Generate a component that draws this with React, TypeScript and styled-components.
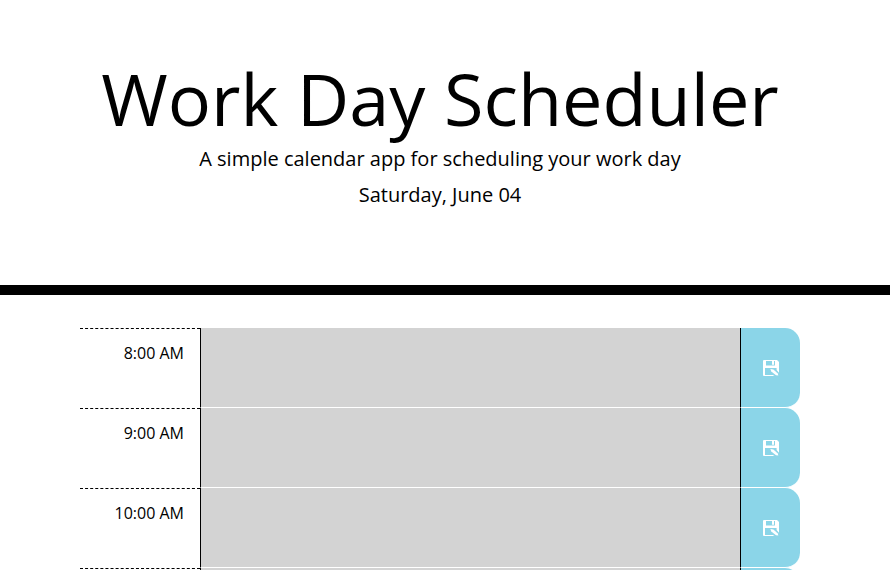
import React from "react";
import styled, { createGlobalStyle } from "styled-components";

const GlobalStyle = createGlobalStyle`
  *, *::before, *::after { box-sizing: border-box; }
  html, body { margin: 0; height: 100%; }
  body {
    overflow: hidden;
    background: #fff;
    color: #000;
    font-family: "Open Sans", sans-serif;
    font-size: 16px;
    font-weight: 400;
    line-height: 1;
  }
`;

const Page = styled.div`
  height: 570px;
  overflow: hidden;
`;

const Header = styled.header`
  height: 295px;
  padding-top: 55px;
  padding-right: 10px;
  border-bottom: 10px solid #000;
  text-align: center;
`;

const Title = styled.h1`
  margin: 0 0 3px;
  font-size: 72px;
  font-weight: 400;
  line-height: 86px;
`;

const Lead = styled.p`
  margin: 0 0 6px;
  font-size: 20px;
  font-weight: 400;
  line-height: 30px;
`;

const Schedule = styled.main`
  width: 720px;
  margin: 33px 0 0 80px;
`;

const Row = styled.div`
  display: grid;
  grid-template-columns: 120px 541px 59px;
  height: 80px;
`;

const Hour = styled.div`
  padding: 15px 16px 0 0;
  border-top: 1px dashed #000;
  line-height: 18px;
  text-align: right;
`;

const Entry = styled.textarea`
  display: block;
  height: 80px;
  margin: 0;
  border: 0;
  border-left: 1px solid #000;
  border-right: 1px solid #000;
  border-bottom: 1px solid #fff;
  border-radius: 0;
  background: #d3d3d3;
  resize: none;
`;

const SaveButton = styled.button`
  display: flex;
  align-items: center;
  justify-content: center;
  height: 80px;
  padding: 0;
  border: 0;
  border-bottom: 1px solid #fff;
  border-radius: 0 15px 15px 0;
  background: #8bd5e8;
  color: #fff;
`;

const SaveIcon = () => (
  <svg width="16" height="16" viewBox="0 0 16 16" fill="currentColor">
    <path
      fillRule="evenodd"
      d="M.7 0H14L16 2V12.8L13.6 10V8H2V15H9.7L11.5 16H.7L0 15.3V.7ZM3 1V5.6H12V1H11V4.8H9V1Z"
    />
    <path d="M7.4 9L10.4 9.6L14.8 13.4L15.3 15.6L13 15.2L8.3 11.6Z" />
  </svg>
);

const hours = ["8:00 AM", "9:00 AM", "10:00 AM", "11:00 AM"];

export default function App() {
  return (
    <Page>
      <GlobalStyle />
      <Header>
        <Title>Work Day Scheduler</Title>
        <Lead>A simple calendar app for scheduling your work day</Lead>
        <Lead>Saturday, June 04</Lead>
      </Header>
      <Schedule>
        {hours.map((hour) => (
          <Row key={hour}>
            <Hour>{hour}</Hour>
            <Entry aria-label={hour} />
            <SaveButton aria-label="Save">
              <SaveIcon />
            </SaveButton>
          </Row>
        ))}
      </Schedule>
    </Page>
  );
}
